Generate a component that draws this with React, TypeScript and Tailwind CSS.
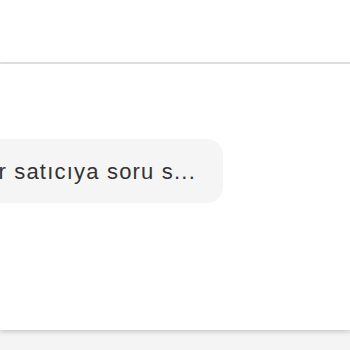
export default function App() {
  return (
    <div className="flex h-[350px] w-full flex-col bg-[#f4f4f4] font-['Liberation_Sans',Arial,sans-serif]">
      <div className="h-[64px] border-b-2 border-[#e2e2e2] bg-white" />
      <div className="h-[266px] bg-white pt-[75px] shadow-[0_2px_5px_rgba(0,0,0,0.18)]">
        <div className="flex w-[223px] justify-end">
          <div className="flex h-[64px] shrink-0 items-center whitespace-nowrap rounded-2xl bg-[#f5f5f5] pl-6 pr-[27px] text-[22px] tracking-[1.2px] text-[#333333]">
            Ürün hakkında bir satıcıya soru s...
          </div>
        </div>
      </div>
    </div>
  );
}
